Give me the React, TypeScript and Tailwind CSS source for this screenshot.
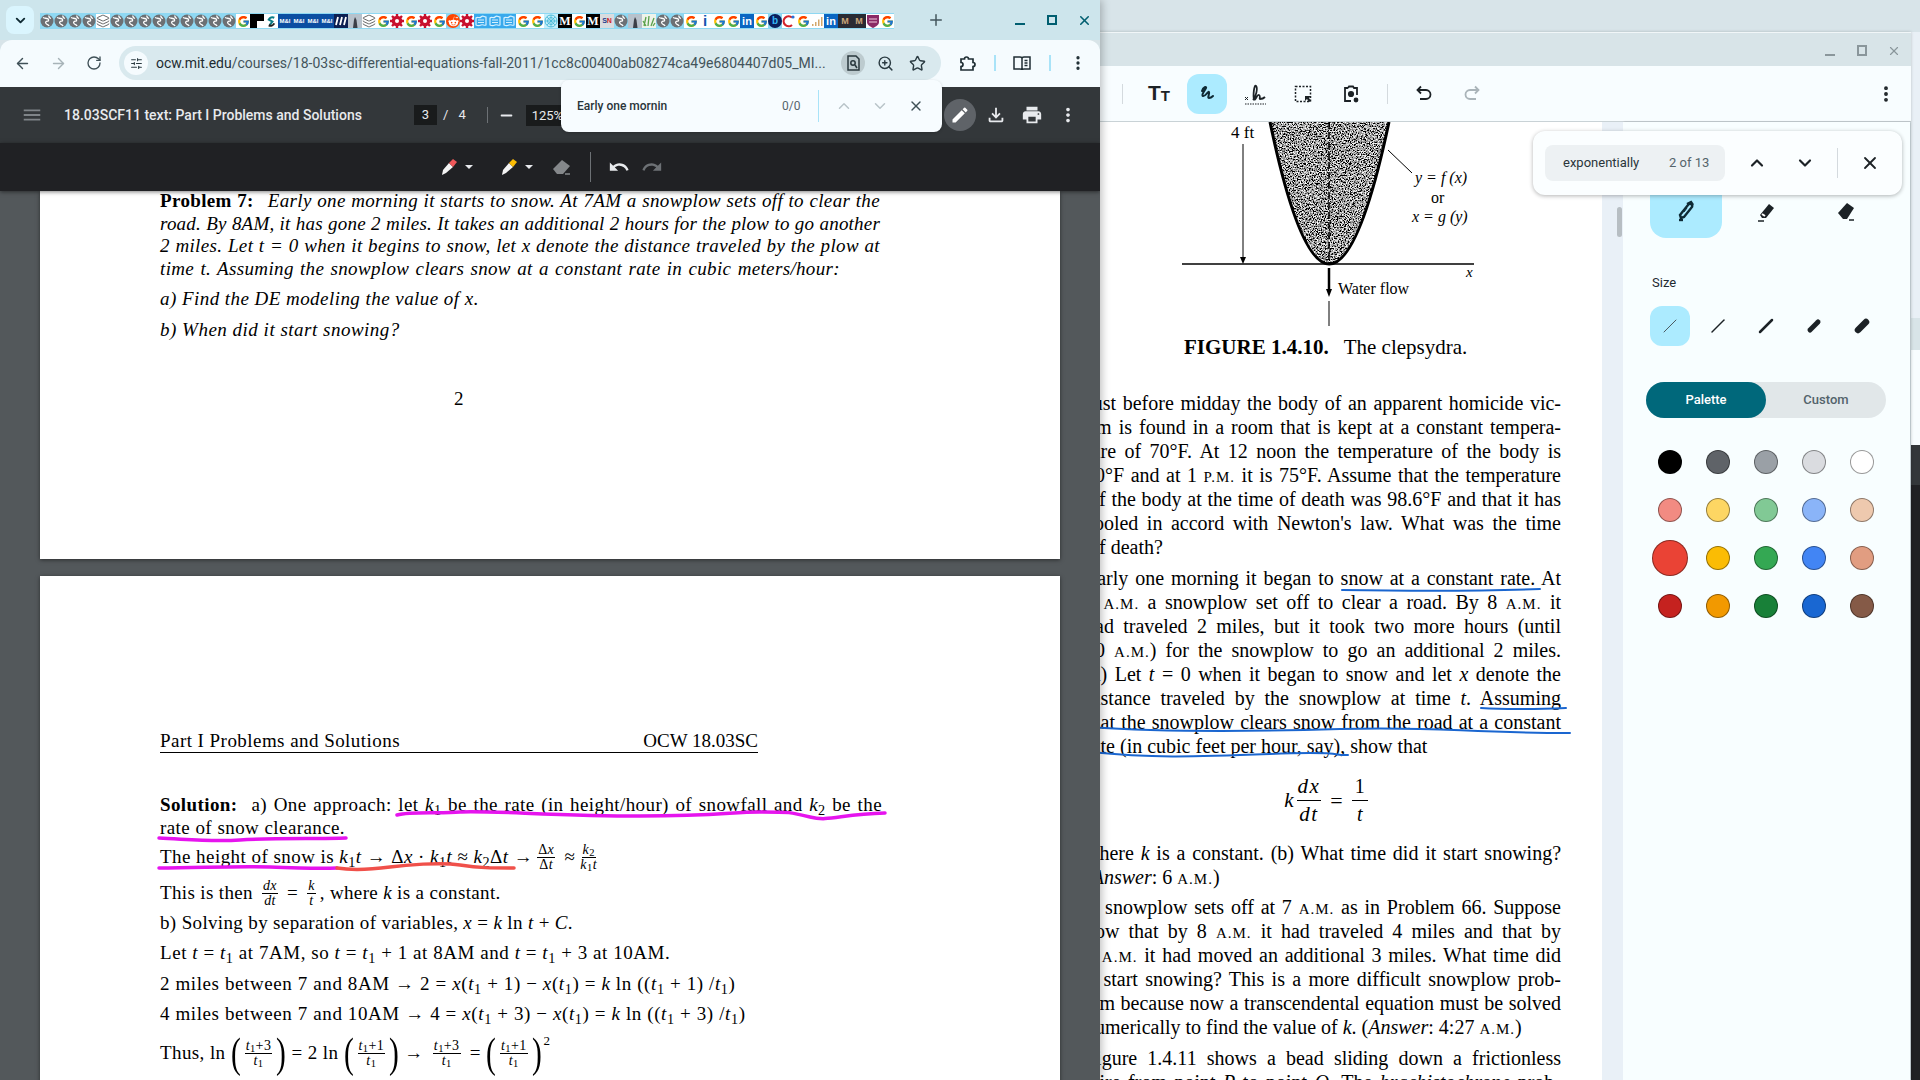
import React from 'react';
import { ArrowLeft, ArrowRight, RotateCw, Star, ZoomIn, EllipsisVertical, X, Minus, Plus, ChevronUp, ChevronDown, ChevronDown as Chev, SlidersHorizontal, Layers } from 'lucide-react';
import { MdEdit, MdMenu, MdPrint, MdMoreVert, MdOutlineFileDownload, MdUndo, MdRedo } from 'react-icons/md';
import { FcGoogle } from 'react-icons/fc';
import { FaRedditAlien } from 'react-icons/fa';

const tabs = ['globe','globe','globe','globe','stack','globe','globe','globe','globe','globe','globe','globe','globe','globe','g','black','s','mi','mi','mi','mi','navy','photo','stack','g','flower','g','flower','g','reddit','flower','blue','blue','blue','g','g','web','mb','g','mb','sn','globe','photo','green','globe','globe','g','i','g','g','in','g','b','q','g','chart','in','md','md','shield','g'];

function Favicon({ t }: { t: string }) {
  const small = "text-[6px] leading-[14px] font-bold text-center w-[14px] h-[14px] block font-['Liberation_Sans',sans-serif]";
  switch (t) {
    case 'g':
      return <span className="w-[14px] h-[14px] bg-white flex items-center justify-center"><FcGoogle size={13} /></span>;
    case 'globe':
      return (
        <svg width="14" height="14" viewBox="0 0 14 14">
          <circle cx="7" cy="7" r="6.5" fill="#6c7074" />
          <path d="M3 3.5c2 1 3 .5 4.5 1.2S9 7 7.5 7.2 5 8 6 9.5s2.5 1 3 2.5M9 1.5c-.5 1.500.5 2.500 2 3" fill="none" stroke="#fff" strokeWidth="1.3" />
        </svg>
      );
    case 'stack':
      return <span className="w-[14px] h-[14px] bg-white flex items-center justify-center"><Layers size={14} strokeWidth={1.4} color="#444" /></span>;
    case 'black':
      return <svg width="14" height="14" viewBox="0 0 14 14"><rect width="14" height="14" fill="#000" /><rect x="7" y="7" width="7" height="7" fill="#fff" /></svg>;
    case 's':
      return <span className="w-[14px] h-[14px] bg-white flex items-center justify-center"><svg width="13" height="13" viewBox="0 0 14 14"><path d="M10 3a4.500 4.500 0 0 0-6 2l4 2-3 4" fill="none" stroke="#0b7d86" strokeWidth="2.200" /><path d="M4 11a4.500 4.500 0 0 0 6-2" fill="none" stroke="#222" strokeWidth="2.200" /></svg></span>;
    case 'mi':
      return <span className={`${small} bg-[#0b4ea2] text-white`}>M&I</span>;
    case 'navy':
      return <span className="w-[14px] h-[14px] bg-[#0c1f52] flex items-center justify-center"><svg width="12" height="10" viewBox="0 0 12 10"><path d="M1 9l2-8M5 9l2-8M9 9l2-8" stroke="#fff" strokeWidth="1.800" /></svg></span>;
    case 'photo':
      return <svg width="14" height="14" viewBox="0 0 14 14"><rect width="14" height="14" fill="#b8c2cc" /><path d="M5 14l1-8 1-3 1.500 3 1 8z" fill="#3c3f47" /></svg>;
    case 'flower':
      return <svg width="14" height="14" viewBox="0 0 14 14"><rect width="14" height="14" fill="#fff" /><circle cx="7" cy="7" r="5.300" fill="#c8102e" /><path d="M7 0v14M0 7h14M2 2l10 10M12 2L2 12" stroke="#c8102e" strokeWidth="2.400" /><circle cx="7" cy="7" r="2" fill="#fff" /></svg>;
    case 'reddit':
      return <span className="w-[14px] h-[14px] rounded-full bg-[#ff4500] flex items-center justify-center"><FaRedditAlien size={11} color="#fff" /></span>;
    case 'blue':
      return <svg width="14" height="14" viewBox="0 0 14 14"><rect width="14" height="14" fill="#38a9ec" /><path d="M2 11V4c2-2 3 1 5-1s3 0 5 0v8c-2 1-3-1-5 0s-3 1-5 0zM4 6h6M4 8.500h6" fill="none" stroke="#d6f1ff" strokeWidth="1.200" /></svg>;
    case 'web':
      return <svg width="14" height="14" viewBox="0 0 14 14"><rect width="14" height="14" fill="#c6eefb" /><circle cx="7" cy="7" r="6" fill="none" stroke="#37b2d3" strokeWidth=".8" /><circle cx="7" cy="7" r="3.500" fill="none" stroke="#37b2d3" strokeWidth=".8" /><path d="M1 7h12M7 1v12M3 3l8 8M11 3l-8 8" stroke="#37b2d3" strokeWidth=".7" /></svg>;
    case 'mb':
      return <span className="w-[14px] h-[14px] bg-black text-white text-[12px] leading-[14px] font-bold text-center font-['Liberation_Serif',serif] overflow-hidden">M</span>;
    case 'sn':
      return <span className="w-[14px] h-[14px] bg-[#d9dcdf] text-[7px] leading-[14px] font-bold text-center font-['Liberation_Sans',sans-serif]"><span className="text-[#1f3e8f]">S</span><span className="text-[#d01c2a]">N</span></span>;
    case 'green':
      return <svg width="14" height="14" viewBox="0 0 14 14"><rect width="14" height="14" fill="#eef3ea" /><path d="M2 12L4 3M6 12L7 2M9 12l3-8M4 12l-3-5M11 12l2-3" stroke="#5aa14a" strokeWidth="1.300" /></svg>;
    case 'i':
      return <span className="w-[14px] h-[14px] bg-white text-[#1558b0] text-[15px] leading-[14px] font-bold text-center font-['Liberation_Sans',sans-serif]">i</span>;
    case 'in':
      return <span className="w-[14px] h-[14px] bg-[#0a66c2] text-white text-[11px] leading-[14px] font-bold text-center font-['Liberation_Sans',sans-serif]">in</span>;
    case 'b':
      return <span className="w-[14px] h-[14px] rounded-full bg-[#0a1f5c] text-[#37b8f5] text-[10px] leading-[14px] font-bold text-center font-['Liberation_Sans',sans-serif]">b</span>;
    case 'q':
      return <svg width="14" height="14" viewBox="0 0 14 14"><rect width="14" height="14" fill="#fff" /><path d="M10 3.500A5 5 0 1 0 10 11" fill="none" stroke="#d3232a" strokeWidth="2.200" /><circle cx="11" cy="3" r="1.600" fill="#2a6fd6" /></svg>;
    case 'chart':
      return <svg width="14" height="14" viewBox="0 0 14 14"><rect width="14" height="14" fill="#fff" /><path d="M2 12h1.500v-2H2zM5 12h1.500V8H5zM8 12h1.500V5.500H8zM11 12h1.500V3H11z" fill="#d3a76a" /></svg>;
    case 'md':
      return <span className="w-[14px] h-[14px] bg-[#2a2b33] text-[#c9a67a] text-[9px] leading-[14px] font-bold text-center font-['Liberation_Sans',sans-serif]">M</span>;
    case 'shield':
      return <svg width="14" height="14" viewBox="0 0 14 14"><rect width="14" height="14" fill="#fff" /><path d="M1 1h12v7c0 3-3 4.500-6 6-3-1.500-6-3-6-6z" fill="#8a2a66" /><path d="M3 5h8M3 8h8" stroke="#f1c9dd" strokeWidth="1.200" /></svg>;
    default:
      return <span className="w-[14px] h-[14px]" />;
  }
}

function TabStrip() {
  return (
    <div className="h-[40px] bg-[#cde5ec] flex items-center relative">
      <div className="ml-[6px] w-[28px] h-[28px] rounded-lg bg-[#daf5fe] flex items-center justify-center"><Chev size={15} strokeWidth={3} color="#0f2a33" /></div>
      <div className="ml-[6px] flex h-[16px] mt-[2px]">
        {tabs.map((t, i) => (
          <div key={i} className="w-[14px] h-[16px] flex items-center justify-center bg-[#8fd8f2] overflow-hidden"><Favicon t={t} /></div>
        ))}
      </div>
      <Plus size={18} strokeWidth={2} color="#43565d" className="ml-[33px]" />
      <div className="absolute right-0 top-0 h-[40px] w-[96px] flex items-center">
        <div className="w-[32px] flex justify-center"><span className="w-[10px] h-[2px] mt-[8px] bg-[#005e70]" /></div>
        <div className="w-[32px] flex justify-center"><span className="w-[10px] h-[10px] border-2 border-[#005e70]" /></div>
        <div className="w-[32px] flex justify-center"><X size={15} strokeWidth={2.5} color="#005e70" /></div>
      </div>
    </div>
  );
}

function AddressBar() {
  return (
    <div className="h-[47px] pb-[1px] bg-[#f5fbfe] rounded-t-xl flex items-center relative">
      <ArrowLeft size={17} strokeWidth={2} color="#3f5057" className="ml-[14px]" />
      <ArrowRight size={17} strokeWidth={2} color="#a7b3b8" className="ml-[19px]" />
      <RotateCw size={16} strokeWidth={2} color="#3f5057" className="ml-[19px]" />
      <div className="ml-[17px] w-[822px] h-[34px] rounded-full bg-[#d9e9ee] flex items-center">
        <div className="ml-[5px] w-[24px] h-[24px] rounded-full bg-[#f5fbfe] flex items-center justify-center"><SlidersHorizontal size={13} strokeWidth={2} color="#2b3b42" /></div>
        <div className="ml-[8px] w-[672px] text-[14px] leading-[34px] text-[#43545b] whitespace-nowrap overflow-hidden"><span className="text-[#1d2b31]">ocw.mit.edu</span>/courses/18-03sc-differential-equations-fall-2011/1cc8c00400ab08274ca49e6804407d05_MI...</div>
        <div className="ml-[13px] w-[24px] h-[24px] rounded-full bg-[#bdcbcf] flex items-center justify-center">
          <svg width="13" height="16" viewBox="0 0 13 16" fill="none" stroke="#28373d" strokeWidth="1.500"><path d="M1 1h8l3 3v11H1z" /><circle cx="6" cy="8" r="2.200" /><path d="M8 10l2 3" /></svg>
        </div>
        <ZoomIn size={17} strokeWidth={2} color="#2b3b42" className="ml-[12px]" />
        <Star size={17} strokeWidth={2} color="#2b3b42" className="ml-[15px]" />
      </div>
      <svg className="ml-[18px]" width="18" height="18" viewBox="0 0 18 18" fill="none" stroke="#1f2e34" strokeWidth="1.700"><path d="M2 5h3.500a2 2 0 0 1 4 0H14v3.500a2 2 0 0 1 0 4V16H2v-3.500a2 2 0 0 0 0-4z" /></svg>
      <span className="ml-[17px] w-[2px] h-[16px] bg-[#a9e3f8]" />
      <svg className="ml-[17px]" width="18" height="16" viewBox="0 0 18 16" fill="none" stroke="#1f2e34" strokeWidth="1.500"><path d="M1 2h6c1 0 2 .6 2 1.500C9 2.600 10 2 11 2h6v12h-6c-1 0-2 .5-2 1-0-.5-1-1-2-1H1zM9 3.500V15M11.500 5.500h3M11.500 8h3M11.500 10.500h3" /></svg>
      <span className="ml-[18px] w-[2px] h-[16px] bg-[#a9e3f8]" />
      <EllipsisVertical size={18} strokeWidth={2.4} color="#1f2e34" className="ml-[18px]" />
    </div>
  );
}

function PenIcon({ color }: { color: string }) {
  return (
    <svg width="20" height="20" viewBox="0 0 20 20">
      <path d="M3 18l1-5 6-7 4 4-7 6z" fill="#f4f4f4" />
      <path d="M10 6l4-4 4 3-4 5z" fill={color} />
    </svg>
  );
}

function PdfToolbars() {
  return (
    <>
      <div className="h-[56px] bg-[#33373a] flex items-center relative text-[#e8eaed]">
        <MdMenu size={22} color="#7f8488" className="ml-[21px]" />
        <div className="ml-[21px] w-[350px] text-[14px] font-medium whitespace-nowrap">18.03SCF11 text: Part I Problems and Solutions</div>
        <div className="w-[23px] h-[20px] bg-[#191b1c] text-[13px] leading-[20px] text-center">3</div>
        <span className="ml-[6px] text-[13px]">/</span>
        <span className="ml-[10px] text-[13px]">4</span>
        <span className="ml-[21px] w-px h-[16px] bg-[#6d7175]" />
        <Minus size={17} strokeWidth={2.5} color="#e8eaed" className="ml-[10px]" />
        <div className="ml-[11px] w-[44px] h-[21px] bg-[#191b1c] text-[13px] leading-[21px] pl-[6px] overflow-hidden">125%</div>
        <div className="absolute left-[944px] top-[12px] w-[32px] h-[32px] rounded-full bg-[#5f6368] flex items-center justify-center"><MdEdit size={20} color="#fff" /></div>
        <MdOutlineFileDownload size={22} color="#e8eaed" className="absolute left-[985px] top-[17px]" />
        <MdPrint size={22} color="#e8eaed" className="absolute left-[1021px] top-[17px]" />
        <MdMoreVert size={22} color="#e8eaed" className="absolute left-[1057px] top-[17px]" />
      </div>
      <div className="h-[48px] bg-[#202124] shadow-[0_1px_4px_rgba(0,0,0,0.5)] relative z-10 flex items-center">
        <div className="ml-[439px]"><PenIcon color="#f0585a" /></div>
        <span className="ml-[6px] w-0 h-0 border-x-[4px] border-x-transparent border-t-[4px] border-t-[#e8eaed]" />
        <div className="ml-[26px]"><PenIcon color="#fbbc04" /></div>
        <span className="ml-[6px] w-0 h-0 border-x-[4px] border-x-transparent border-t-[4px] border-t-[#e8eaed]" />
        <svg className="ml-[19px]" width="20" height="18" viewBox="0 0 20 18"><path d="M1 11L10 2l8 6-7 8H5z" fill="#85888b" /><path d="M13 16h5" stroke="#85888b" strokeWidth="1.500" /></svg>
        <span className="ml-[18px] w-px h-[30px] bg-[#6d7175]" />
        <MdUndo size={22} color="#e8eaed" className="ml-[17px]" />
        <MdRedo size={22} color="#6d7175" className="ml-[11px]" />
      </div>
    </>
  );
}

function FindLeft() {
  return (
    <div className="absolute left-[561px] top-[80px] w-[381px] h-[52px] rounded-lg bg-[#f7fcff] flex items-center z-20 shadow-[0_1px_3px_rgba(0,0,0,0.2)]">
      <span className="ml-[16px] w-[205px] text-[12px] font-medium text-[#2a353a]">Early one mornin</span>
      <span className="text-[12px] text-[#55646b] w-[36px]">0/0</span>
      <span className="w-px h-[32px] bg-[#a9e3f8]" />
      <ChevronUp size={18} strokeWidth={2} color="#b9c4c9" className="ml-[16px]" />
      <ChevronDown size={18} strokeWidth={2} color="#b9c4c9" className="ml-[18px]" />
      <X size={16} strokeWidth={2} color="#3f5057" className="ml-[19px]" />
    </div>
  );
}

function Frac({ a, b, size = 'text-[14px]' }: { a: React.ReactNode; b: React.ReactNode; size?: string }) {
  return (
    <span className={`inline-flex flex-col items-center leading-[14px] mx-[4px] ${size}`}>
      <span className="px-[1px] border-b border-black">{a}</span>
      <span className="px-[1px]">{b}</span>
    </span>
  );
}

const I = ({ children }: { children: React.ReactNode }) => <i>{children}</i>;
const T1 = () => <span><i>t</i><sub>1</sub></span>;
const Gap = () => <span className="inline-block w-[14px]" />;

function Rows({ className = '', children }: { className?: string; children: React.ReactNode }) {
  return <div className={`h-[22px] leading-[22px] flex items-center whitespace-pre ${className}`}>{children}</div>;
}

function J({ className = 'tracking-[0.35px]', children }: { className?: string; children: React.ReactNode }) {
  return <div className={`h-[22.500px] leading-[22px] italic [text-align-last:justify] whitespace-nowrap ${className}`}>{children}</div>;
}

function BigParen({ c }: { c: string }) {
  return <span className="w-[10px] flex justify-center text-[42px] leading-[22px] font-light scale-x-[0.7]">{c}</span>;
}

function PdfPages() {
  return (
    <div className="flex-1 bg-[#53585b] pl-[40px] overflow-hidden font-['Liberation_Serif',serif] text-black text-[19px]">
      <div className="w-[1020px] h-[368px] bg-white pl-[120px] shadow-[0_1px_4px_rgba(0,0,0,0.5)] overflow-hidden">
        <div className="w-[720px] -mt-[1px]">
          <J><b className="not-italic">Problem 7:</b><Gap />Early one morning it starts to snow. At 7AM a snowplow sets off to clear the</J>
          <J className="tracking-[0.2px]">road. By 8AM, it has gone 2 miles. It takes an additional 2 hours for the plow to go another</J>
          <J>2 miles. Let t = 0 when it begins to snow, let x denote the distance traveled by the plow at</J>
          <J className="w-[680px] tracking-[0.35px]">time t. Assuming the snowplow clears snow at a constant rate in cubic meters/hour:</J>
          <div className="h-[22px] leading-[22px] italic mt-[8px] tracking-[0.45px]">a) Find the DE modeling the value of x.</div>
          <div className="h-[22px] leading-[22px] italic mt-[9px] tracking-[0.5px]">b) When did it start snowing?</div>
          <div className="h-[22px] leading-[22px] mt-[47px] ml-[294px]">2</div>
        </div>
      </div>
      <div className="mt-[17px] w-[1020px] h-[600px] bg-white pl-[120px] relative shadow-[0_1px_4px_rgba(0,0,0,0.5)]">
        <div className="pt-[155px] w-[598px]">
          <div className="h-[22px] leading-[20px] flex justify-between border-b border-black"><span className="tracking-[0.45px]">Part I Problems and Solutions</span><span>OCW 18.03SC</span></div>
        </div>
        <div className="mt-[41px] w-[722px] h-[22px] leading-[22px] tracking-[0.4px] whitespace-nowrap [text-align-last:justify]"><b>Solution:</b><Gap />a) One approach: let <I>k</I><sub>1</sub> be the rate (in height/hour) of snowfall and <I>k</I><sub>2</sub> be the</div>
        <div className="mt-[1px] h-[22px] leading-[22px] w-[185px] tracking-[0.4px] [text-align-last:justify] whitespace-nowrap">rate of snow clearance.</div>
        <Rows className="mt-[7px] tracking-[0.45px]"><span>The height of snow is <I>k</I><sub>1</sub><I>t</I> → Δ<I>x</I> · <I>k</I><sub>1</sub><I>t</I> ≈ <I>k</I><sub>2</sub>Δ<I>t</I> →</span><Frac a={<span>Δ<I>x</I></span>} b={<span>Δ<I>t</I></span>} /><span> ≈</span><Frac a={<span><I>k</I><sub>2</sub></span>} b={<span><I>k</I><sub>1</sub><I>t</I></span>} /></Rows>
        <Rows className="mt-[14px] tracking-[0.35px]"><span>This is then </span><Frac a={<I>dx</I>} b={<I>dt</I>} /><span> = </span><Frac a={<I>k</I>} b={<I>t</I>} /><span>, where <I>k</I> is a constant.</span></Rows>
        <Rows className="mt-[8px] tracking-[0.35px]"><span>b) Solving by separation of variables, <I>x</I> = <I>k</I> ln <I>t</I> + <I>C</I>.</span></Rows>
        <Rows className="mt-[8px] tracking-[0.55px]"><span>Let <I>t</I> = <T1 /> at 7AM, so <I>t</I> = <T1 /> + 1 at 8AM and <I>t</I> = <T1 /> + 3 at 10AM.</span></Rows>
        <Rows className="mt-[9px] tracking-[0.6px]"><span>2 miles between 7 and 8AM → 2 = <I>x</I>(<T1 /> + 1) − <I>x</I>(<T1 />) = <I>k</I> ln ((<T1 /> + 1) /<T1 />)</span></Rows>
        <Rows className="mt-[8px] tracking-[0.6px]"><span>4 miles between 7 and 10AM → 4 = <I>x</I>(<T1 /> + 3) − <I>x</I>(<T1 />) = <I>k</I> ln ((<T1 /> + 3) /<T1 />)</span></Rows>
        <Rows className="mt-[17px] tracking-[0.4px]"><span>Thus, ln </span><BigParen c="(" /><Frac a={<span><T1 />+3</span>} b={<T1 />} /><BigParen c=")" /><span> = 2 ln </span><BigParen c="(" /><Frac a={<span><T1 />+1</span>} b={<T1 />} /><BigParen c=")" /><span> → </span><Frac a={<span><T1 />+3</span>} b={<T1 />} /><span> = </span><BigParen c="(" /><Frac a={<span><T1 />+1</span>} b={<T1 />} /><BigParen c=")" /><span className="text-[13px] -mt-[24px] ml-[2px]">2</span></Rows>
        <svg className="absolute left-0 top-0 pointer-events-none" width="1020" height="600" viewBox="0 0 1020 600" fill="none" strokeLinecap="round" strokeWidth="3.500">
          <path d="M357 239C372 235 400 238 420 236S520 240 600 240 690 236 720 236 750 236 770 241 800 238 845 237" stroke="#e614ee" />
          <path d="M119 262C145 263 170 266 200 264S280 263 306 262" stroke="#e614ee" />
          <path d="M119 292C160 292 190 290 230 291S275 293 297 292" stroke="#e614ee" />
          <path d="M297 292C315 295 335 293 350 291S400 286 420 289 450 292 474 292" stroke="#f0504a" />
        </svg>
      </div>
    </div>
  );
}

function LeftWindow() {
  return (
    <div className="absolute left-0 top-0 w-[1100px] h-[1080px] flex flex-col z-10 shadow-[2px_0_8px_rgba(0,0,0,0.25)] font-['Roboto',sans-serif] overflow-hidden">
      <TabStrip />
      <AddressBar />
      <PdfToolbars />
      <PdfPages />
      <FindLeft />
    </div>
  );
}

const AM = () => <span className="text-[15px] tracking-[1px]">A.M.</span>;
const PM = () => <span className="text-[15px] tracking-[1px]">P.M.</span>;

function L({ left, className = '', children }: { left?: boolean; className?: string; children: React.ReactNode }) {
  return <div className={`h-[24px] leading-[24px] whitespace-nowrap ${left ? '' : '[text-align-last:justify]'} ${className}`}>{children}</div>;
}

function Figure() {
  return (
    <svg className="block" width="500" height="213" viewBox="0 0 500 213" fill="none">
      <defs>
        <filter id="stipple" x="0" y="0" width="100%" height="100%">
          <feTurbulence type="fractalNoise" baseFrequency="0.75" numOctaves="3" seed="7" />
          <feColorMatrix type="matrix" values="3.200 0 0 0 -1.250 3.200 0 0 0 -1.250 3.200 0 0 0 -1.250 0 0 0 0 1" />
        </filter>
        <clipPath id="bowl"><path d="M170 0 Q229 284 289 0z" /></clipPath>
      </defs>
      <g clipPath="url(#bowl)"><rect x="165" y="0" width="130" height="145" filter="url(#stipple)" /></g>
      <path d="M170 0 Q229 284 289 0" stroke="#000" strokeWidth="3" />
      <path d="M229 0V142" stroke="#000" strokeWidth="1.500" strokeDasharray="7 3" />
      <path d="M82 142H374" stroke="#000" strokeWidth="1.500" />
      <path d="M143 22V139" stroke="#000" strokeWidth="1" />
      <path d="M140 135l3 7 3-7z" fill="#000" />
      <path d="M288 28L312 51" stroke="#000" strokeWidth="1" />
      <path d="M229 146v24" stroke="#000" strokeWidth="2.500" />
      <path d="M226 167l3 8 3-8z" fill="#000" />
      <path d="M229 179v25" stroke="#000" strokeWidth="1" />
      <g fontFamily="'Liberation Serif', serif" fill="#000">
        <text x="131" y="16" fontSize="17">4 ft</text>
        <text x="315" y="61" fontSize="16" fontStyle="italic">y = f (x)</text>
        <text x="331" y="81" fontSize="16">or</text>
        <text x="312" y="100" fontSize="16" fontStyle="italic">x = g (y)</text>
        <text x="366" y="155" fontSize="15" fontStyle="italic">x</text>
        <text x="238" y="172" fontSize="16">Water flow</text>
      </g>
    </svg>
  );
}

function RightDoc() {
  return (
    <div className="w-[602px] relative bg-white overflow-hidden font-['Liberation_Serif',serif] text-[20px] text-black">
      <div className="ml-[100px]"><Figure /></div>
      <div className="ml-[184px] h-[24px] leading-[24px] text-[21px] whitespace-nowrap"><b>FIGURE 1.4.10.</b><span className="inline-block w-[15px]" />The clepsydra.</div>
      <div className="ml-[85px] w-[476px] mt-[32px]">
        <L>Just before midday the body of an apparent homicide vic-</L>
        <L>tim is found in a room that is kept at a constant tempera-</L>
        <L>ture of 70°F. At 12 noon the temperature of the body is</L>
        <L>80°F and at 1 <PM /> it is 75°F. Assume that the temperature</L>
        <L className="ml-[4px]">of the body at the time of death was 98.6°F and that it has</L>
        <L>cooled in accord with Newton's law. What was the time</L>
        <L left className="ml-[4px]">of death?</L>
        <div className="mt-[7px]">
          <L>Early one morning it began to snow at a constant rate. At</L>
          <L>7 <AM /> a snowplow set off to clear a road. By 8 <AM /> it</L>
          <L>had traveled 2 miles, but it took two more hours (until</L>
          <L>10 <AM />) for the snowplow to go an additional 2 miles.</L>
          <L>(a) Let <i>t</i> = 0 when it began to snow and let <i>x</i> denote the</L>
          <L>distance traveled by the snowplow at time <i>t</i>. Assuming</L>
          <L>that the snowplow clears snow from the road at a constant</L>
          <L left>rate (in cubic feet per hour, say), show that</L>
        </div>
        <div className="h-[83px] flex items-center justify-center pl-[6px] pt-[2px]">
          <i className="mr-[3px] text-[21px]">k</i>
          <span className="inline-flex flex-col items-center leading-[27px]"><i className="px-[1px] border-b border-black tracking-[1.500px] text-[21px]">dx</i><i className="tracking-[1.500px] text-[21px]">dt</i></span>
          <span className="mx-[9px] text-[22px]">=</span>
          <span className="inline-flex flex-col items-center leading-[27px]"><span className="px-[3px] border-b border-black">1</span><i>t</i></span>
        </div>
        <L>where <i>k</i> is a constant. (b) What time did it start snowing?</L>
        <L left>(<i>Answer</i>: 6 <AM />)</L>
        <div className="mt-[6px]">
          <L>A snowplow sets off at 7 <AM /> as in Problem 66. Suppose</L>
          <L>now that by 8 <AM /> it had traveled 4 miles and that by</L>
          <L>9 <AM /> it had moved an additional 3 miles. What time did</L>
          <L>it start snowing? This is a more difficult snowplow prob-</L>
          <L>lem because now a transcendental equation must be solved</L>
          <L left>numerically to find the value of <i>k</i>. (<i>Answer</i>: 4:27 <AM />)</L>
        </div>
        <div className="mt-[7px]">
          <L>Figure 1.4.11 shows a bead sliding down a frictionless</L>
          <L>wire from point <i>P</i> to point <i>Q</i>. The <i>brachistochrone</i> prob-</L>
        </div>
      </div>
      <svg className="absolute left-0 top-0 pointer-events-none" width="602" height="960" viewBox="0 0 602 960" fill="none" stroke="#1a66d0" strokeWidth="2" strokeLinecap="round">
        <path d="M342 468c60 1 120 2 198-1" />
        <path d="M481 586c30 2 60 1 85 0" />
        <path d="M90 605c70 5 150 5 250 2s120 4 230 4" />
        <path d="M90 630c60 6 100 5 180 2s60 2 78 1" />
      </svg>
    </div>
  );
}

const sizes = [1, 1.500, 2.500, 5, 6.500];
const colors = ['#000000','#5f6368','#9aa0a6','#dadce0','#ffffff','#f28b82','#fdd663','#81c995','#8ab4f8','#eec9ae','#ea4335','#fbbc04','#34a853','#4285f4','#e19d81','#c5221f','#f29900','#188038','#1967d2','#855a47'];

function SidePanel() {
  return (
    <div className="w-[287px] bg-[#f8feff] pl-[23px] shadow-[1px_0_2px_rgba(0,0,0,0.2)] font-['Roboto',sans-serif]">
      <div className="ml-[4px] mt-[52px] h-[64px] flex gap-2">
        <div className="w-[72px] h-[64px] rounded-b-2xl bg-[#acebff] flex items-center justify-center pt-[10px]">
          <svg width="22" height="22" viewBox="0 0 22 22" fill="none" stroke="#0e2a35" strokeWidth="2.400"><path d="M6 18l-1-3L13 5c2-2.500 5-.5 4 2L9 17z" /><path d="M12 4l4-2 2 3" /><path d="M4 20h4" /><path d="M9 12l3-4" strokeWidth="1" /></svg>
        </div>
        <div className="w-[72px] flex items-center justify-center pt-[10px]">
          <svg width="22" height="22" viewBox="0 0 22 22"><path d="M7 18l-2-3 9-11 5 4-8 10z" fill="#1c2226" /><path d="M7 14l3 2" stroke="#fff" strokeWidth="2" /><path d="M3 21h6" stroke="#1c2226" strokeWidth="1.500" /></svg>
        </div>
        <div className="w-[72px] flex items-center justify-center pt-[10px]">
          <svg width="22" height="22" viewBox="0 0 22 22"><path d="M3 13L12 3l7 5-7 11H8z" fill="#1c2226" /><path d="M14 20h5" stroke="#1c2226" strokeWidth="1.500" /></svg>
        </div>
      </div>
      <div className="ml-[6px] mt-[36px] h-[18px] text-[13px] leading-[18px] text-[#1f2a30]">Size</div>
      <div className="ml-[4px] mt-[14px] flex gap-2">
        {sizes.map((s, i) => (
          <div key={i} className={`w-[40px] h-[40px] rounded-xl flex items-center justify-center ${i === 0 ? 'bg-[#acebff]' : ''}`}>
            <svg width="16" height="16" viewBox="0 0 16 16"><path d={i < 3 ? 'M2 14L14 2' : 'M4 12L12 4'} stroke={i === 0 ? '#4a5a60' : '#1c2226'} strokeWidth={s} strokeLinecap="round" /></svg>
          </div>
        ))}
      </div>
      <div className="mt-[36px] w-[240px] h-[36px] rounded-full bg-[#e1e7e9] flex text-[13px] font-medium leading-[36px] text-center">
        <div className="w-[120px] rounded-full bg-[#00687b] text-white">Palette</div>
        <div className="w-[120px] text-[#53636b]">Custom</div>
      </div>
      <div className="mt-[20px] w-[240px] grid grid-cols-5">
        {colors.map((c, i) => (
          <div key={i} className="h-[48px] flex items-center justify-center">
            <span className={`rounded-full border border-black/40 ${i === 10 ? 'w-[36px] h-[36px]' : 'w-[24px] h-[24px]'}`} style={{ backgroundColor: c }} />
          </div>
        ))}
      </div>
    </div>
  );
}

function FindRight() {
  return (
    <div className="absolute left-[533px] top-[98px] w-[369px] h-[64px] pb-[1px] rounded-xl bg-[#fbfeff] shadow-[0_1px_4px_rgba(0,0,0,0.3)] flex items-center z-10 font-['Roboto',sans-serif]">
      <div className="ml-[12px] w-[180px] h-[36px] rounded-lg bg-[#edf1f3] flex items-center text-[13px] text-[#2a353a]">
        <span className="ml-[18px] w-[106px]">exponentially</span>
        <span className="text-[#55646b]">2 of 13</span>
      </div>
      <ChevronUp size={20} strokeWidth={2.6} color="#1c2226" className="ml-[22px]" />
      <ChevronDown size={20} strokeWidth={2.6} color="#1c2226" className="ml-[28px]" />
      <span className="ml-[22px] w-px h-[30px] bg-[#d4dade]" />
      <X size={20} strokeWidth={2.2} color="#1c2226" className="ml-[22px]" />
    </div>
  );
}

function RightToolbar() {
  return (
    <div className="h-[56px] bg-[#f8fdff] border-b border-[#c9d2d6] flex items-center">
      <span className="ml-[122px] w-px h-[20px] bg-[#d4dade]" />
      <div className="ml-[16px] w-[40px] h-[40px] flex items-end justify-center pb-[11px] font-['Liberation_Sans',sans-serif] font-bold text-[#1c2226] leading-none"><span className="text-[21px]">T</span><span className="text-[15px]">T</span></div>
      <div className="ml-[8px] w-[40px] h-[40px] rounded-xl bg-[#acebff] flex items-center justify-center">
        <svg width="20" height="20" viewBox="0 0 20 20" fill="none" stroke="#0e2a35" strokeWidth="2" strokeLinecap="round"><path d="M5 7c1-4 5-5 4-3S4 11 6 12s5-5 6-4-2 6 0 6 3-1 4-2" /></svg>
      </div>
      <div className="ml-[8px] w-[40px] h-[40px] flex items-center justify-center">
        <svg width="24" height="24" viewBox="0 0 24 24" fill="none" stroke="#1c2226"><path d="M2 15l3 3M5 15l-3 3" strokeWidth="1" /><path d="M10 18c3-3 5-12 3-14s-3 10-2 13 3-5 5-4 0 4 1 4 3 0 5-2" strokeWidth="1.800" /><path d="M2 22h21" strokeWidth="1.200" strokeDasharray="1.500 1" /></svg>
      </div>
      <div className="ml-[8px] w-[40px] h-[40px] flex items-center justify-center">
        <svg width="18" height="18" viewBox="0 0 18 18" fill="none"><rect x="1.500" y="1.500" width="15" height="15" stroke="#1c2226" strokeWidth="1.500" strokeDasharray="2 1.500" /><path d="M11 11h6l-2 2 2 3-2 1-2-3-2 2z" fill="#1c2226" /></svg>
      </div>
      <div className="ml-[8px] w-[40px] h-[40px] flex items-center justify-center">
        <svg width="18" height="18" viewBox="0 0 18 18" fill="none" stroke="#1c2226" strokeWidth="1.800"><path d="M6 3l1-1.500h4L12 3h3v7M9 16H3V3h3" /><circle cx="9" cy="9" r="2.200" fill="#1c2226" /><circle cx="14" cy="15" r="1.500" fill="#1c2226" /></svg>
      </div>
      <span className="ml-[16px] w-px h-[20px] bg-[#d4dade]" />
      <div className="ml-[16px] w-[40px] flex justify-center">
        <svg width="18" height="18" viewBox="0 0 18 18" fill="none" stroke="#1c2226" strokeWidth="1.800"><path d="M6 1.500L2.500 5 6 8.500M3 5h8a4.500 4.500 0 0 1 0 9H5" /></svg>
      </div>
      <div className="ml-[8px] w-[40px] flex justify-center">
        <svg width="18" height="18" viewBox="0 0 18 18" fill="none" stroke="#aab4b9" strokeWidth="1.800"><path d="M12 1.500L15.500 5 12 8.500M15 5H7a4.500 4.500 0 0 0 0 9h6" /></svg>
      </div>
      <EllipsisVertical size={20} strokeWidth={2.6} color="#1c2226" className="ml-[384px]" />
    </div>
  );
}

function RightWindow() {
  return (
    <div className="absolute left-[1000px] top-[32px] w-[911px] h-[1048px] flex flex-col border-t border-[#f1f6f8] shadow-[0_0_3px_rgba(0,0,0,0.2)] overflow-hidden">
      <div className="h-[33px] pt-[2px] bg-[#d8e4e8] flex items-center justify-end pr-[1px] text-[#8a969b]">
        <div className="w-[32px] flex justify-center"><span className="w-[10px] h-[2px] mt-[8px] bg-[#8a969b]" /></div>
        <div className="w-[32px] flex justify-center"><span className="w-[10px] h-[11px] border-2 border-[#8a969b]" /></div>
        <div className="w-[32px] flex justify-center"><X size={14} strokeWidth={2} color="#8a969b" /></div>
      </div>
      <RightToolbar />
      <div className="flex-1 flex min-h-0">
        <RightDoc />
        <div className="w-[21px] bg-[#e9f0f7] relative">
          <span className="absolute left-[15px] top-[85px] w-[5px] h-[30px] rounded-full bg-[#b7bec3]" />
        </div>
        <SidePanel />
      </div>
      <FindRight />
    </div>
  );
}

function BackStrip() {
  return (
    <div className="absolute left-[1911px] top-0 w-[9px] h-[1080px] flex flex-col">
      <div className="h-[32px] bg-[#d8e4e9]" />
      <div className="h-[286px] bg-[#e9f0f6]" />
      <div className="h-[32px] bg-[#d8e4e8]" />
      <div className="h-[95px] bg-[#f8fdff]" />
      <div className="h-[40px] bg-[#33373a]" />
      <div className="flex-1 bg-[#202124]" />
    </div>
  );
}

export default function App() {
  return (
    <div className="relative w-[1920px] h-[1080px] overflow-hidden bg-[#d8e4e9]">
      <BackStrip />
      <RightWindow />
      <LeftWindow />
    </div>
  );
}
